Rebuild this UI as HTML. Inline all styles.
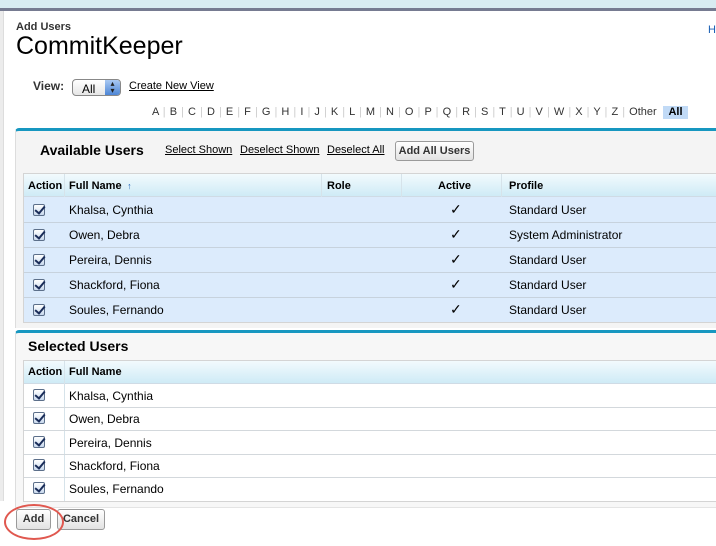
<!DOCTYPE html>
<html><head><meta charset="utf-8"><style>
*{margin:0;padding:0;box-sizing:border-box}
body{width:716px;height:546px;overflow:hidden;background:#fff;font-family:"Liberation Sans",Arial,sans-serif;color:#000;position:relative}
.a{position:absolute;white-space:nowrap}
.lnk{text-decoration:underline;font-size:12px;color:#000}
.hdr{background:linear-gradient(#f2fafd,#cfebf6);}
.cb{position:absolute;width:12px;height:12px;border:1px solid #5c6f8a;border-radius:2px;background:linear-gradient(#fff,#c9d9ee)}
.cb:after{content:"";position:absolute;left:3px;top:-1px;width:4px;height:8px;border:solid #1a2d5a;border-width:0 2px 2px 0;transform:rotate(40deg)}
.btn{position:absolute;border:1px solid #9a9a9a;border-radius:3px;background:linear-gradient(#fff,#e2e2e2);font-weight:bold;font-size:11px;color:#333;text-align:center}
.chk{position:absolute;font-size:14px}
</style></head><body>
<div class="a" style="left:0;top:0;width:716px;height:8px;background:#d8ecf2"></div>
<div class="a" style="left:0;top:8px;width:716px;height:3px;background:#767b91"></div>
<div class="a" style="left:0;top:11px;width:4px;height:490px;background:#ececec;border-right:1px solid #ddd"></div>

<div class="a" style="left:16px;top:21px;font-size:11px;font-weight:bold;color:#333">Add Users</div>
<div class="a" style="left:16px;top:32px;font-size:25px;color:#000">CommitKeeper</div>
<div class="a" style="left:708px;top:24px;font-size:11px;color:#1a5fb4">H</div>

<div class="a" style="left:33px;top:79px;font-size:12px;font-weight:bold;color:#333">View:</div>
<div class="a" style="left:72px;top:79px;width:49px;height:17px;border:1px solid #888;border-radius:4px;background:linear-gradient(#fff,#e6e6e6);font-size:12px;padding:2px 0 0 9px">All
<div style="position:absolute;right:0;top:0;width:15px;height:15px;background:linear-gradient(#a9c9f2,#4d86d6);border-radius:0 3px 3px 0;font-size:8px;color:#222;text-align:center;line-height:7px;padding-top:0px">▴<br>▾</div></div>
<div class="a lnk" style="left:129px;top:80px;font-size:11px">Create New View</div>

<div class="a" style="left:152px;top:106px;font-size:11px;color:#333;word-spacing:1px">A <span style="color:#ccc">|</span> B <span style="color:#ccc">|</span> C <span style="color:#ccc">|</span> D <span style="color:#ccc">|</span> E <span style="color:#ccc">|</span> F <span style="color:#ccc">|</span> G <span style="color:#ccc">|</span> H <span style="color:#ccc">|</span> I <span style="color:#ccc">|</span> J <span style="color:#ccc">|</span> K <span style="color:#ccc">|</span> L <span style="color:#ccc">|</span> M <span style="color:#ccc">|</span> N <span style="color:#ccc">|</span> O <span style="color:#ccc">|</span> P <span style="color:#ccc">|</span> Q <span style="color:#ccc">|</span> R <span style="color:#ccc">|</span> S <span style="color:#ccc">|</span> T <span style="color:#ccc">|</span> U <span style="color:#ccc">|</span> V <span style="color:#ccc">|</span> W <span style="color:#ccc">|</span> X <span style="color:#ccc">|</span> Y <span style="color:#ccc">|</span> Z <span style="color:#ccc">|</span> Other</div>
<div class="a" style="left:663px;top:106px;width:25px;height:13px;background:#c1daf6;font-size:11px;font-weight:bold;text-align:center">All</div>

<!-- Available panel -->
<div class="a" style="left:15px;top:128px;width:701px;height:200px;background:#f4f4f4;border-top:3px solid #1797c0;border-left:1px solid #ddd;border-radius:4px 0 0 0"></div>
<div class="a" style="left:40px;top:142px;font-size:14px;font-weight:bold">Available Users</div>
<div class="a lnk" style="left:165px;top:144px;font-size:11px">Select Shown</div>
<div class="a lnk" style="left:240px;top:144px;font-size:11px">Deselect Shown</div>
<div class="a lnk" style="left:327px;top:144px;font-size:11px">Deselect All</div>
<div class="btn" style="left:395px;top:141px;width:79px;height:20px;line-height:18px">Add All Users</div>

<div class="a" style="left:23px;top:173px;width:693px;height:150px;border:1px solid #d4d4d4;border-right:none;background:#dcebfc"></div>
<div class="a hdr" style="left:24px;top:174px;width:692px;height:23px;border-bottom:1px solid #cfdbe5"></div>
<div class="a" style="left:64px;top:174px;width:1px;height:23px;background:#d6e3ea"></div>
<div class="a" style="left:321px;top:174px;width:1px;height:23px;background:#d6e3ea"></div>
<div class="a" style="left:401px;top:174px;width:1px;height:23px;background:#d6e3ea"></div>
<div class="a" style="left:501px;top:174px;width:1px;height:23px;background:#d6e3ea"></div>
<div class="a" style="left:28px;top:180px;font-size:11px;font-weight:bold">Action</div>
<div class="a" style="left:69px;top:180px;font-size:11px;font-weight:bold">Full Name <span style="color:#1a5fb4;font-size:9px">&nbsp;↑</span></div>
<div class="a" style="left:327px;top:180px;font-size:11px;font-weight:bold">Role</div>
<div class="a" style="left:438px;top:180px;font-size:11px;font-weight:bold">Active</div>
<div class="a" style="left:509px;top:180px;font-size:11px;font-weight:bold">Profile</div>

<div class="a" style="left:24px;top:222px;width:692px;height:1px;background:#c7d2dd"></div>
<div class="a" style="left:24px;top:247px;width:692px;height:1px;background:#c7d2dd"></div>
<div class="a" style="left:24px;top:272px;width:692px;height:1px;background:#c7d2dd"></div>
<div class="a" style="left:24px;top:297px;width:692px;height:1px;background:#c7d2dd"></div>

<div class="cb" style="left:33px;top:204px"></div><div class="a" style="left:69px;top:203px;font-size:12px">Khalsa, Cynthia</div><div class="chk a" style="left:450px;top:201px">✓</div><div class="a" style="left:509px;top:203px;font-size:12px">Standard User</div>
<div class="cb" style="left:33px;top:229px"></div><div class="a" style="left:69px;top:228px;font-size:12px">Owen, Debra</div><div class="chk a" style="left:450px;top:226px">✓</div><div class="a" style="left:509px;top:228px;font-size:12px">System Administrator</div>
<div class="cb" style="left:33px;top:254px"></div><div class="a" style="left:69px;top:253px;font-size:12px">Pereira, Dennis</div><div class="chk a" style="left:450px;top:251px">✓</div><div class="a" style="left:509px;top:253px;font-size:12px">Standard User</div>
<div class="cb" style="left:33px;top:279px"></div><div class="a" style="left:69px;top:278px;font-size:12px">Shackford, Fiona</div><div class="chk a" style="left:450px;top:276px">✓</div><div class="a" style="left:509px;top:278px;font-size:12px">Standard User</div>
<div class="cb" style="left:33px;top:304px"></div><div class="a" style="left:69px;top:303px;font-size:12px">Soules, Fernando</div><div class="chk a" style="left:450px;top:301px">✓</div><div class="a" style="left:509px;top:303px;font-size:12px">Standard User</div>

<!-- Selected panel -->
<div class="a" style="left:15px;top:330px;width:701px;height:178px;background:#f7f7f7;border-top:3px solid #1797c0;border-left:1px solid #ddd;border-bottom:1px solid #e4e4e4;border-radius:4px 0 0 0"></div>
<div class="a" style="left:28px;top:338px;font-size:14px;font-weight:bold">Selected Users</div>
<div class="a" style="left:23px;top:360px;width:693px;height:142px;border:1px solid #d4d4d4;border-right:none;background:#fff"></div>
<div class="a hdr" style="left:24px;top:361px;width:692px;height:23px;border-bottom:1px solid #cfdbe5"></div>
<div class="a" style="left:64px;top:361px;width:1px;height:140px;background:#d6e3ea"></div>
<div class="a" style="left:28px;top:366px;font-size:11px;font-weight:bold">Action</div>
<div class="a" style="left:69px;top:366px;font-size:11px;font-weight:bold">Full Name</div>
<div class="a" style="left:24px;top:407px;width:692px;height:1px;background:#d3d8dc"></div>
<div class="a" style="left:24px;top:430px;width:692px;height:1px;background:#d3d8dc"></div>
<div class="a" style="left:24px;top:454px;width:692px;height:1px;background:#d3d8dc"></div>
<div class="a" style="left:24px;top:477px;width:692px;height:1px;background:#d3d8dc"></div>

<div class="cb" style="left:33px;top:389px"></div><div class="a" style="left:69px;top:389px;font-size:12px">Khalsa, Cynthia</div>
<div class="cb" style="left:33px;top:412px"></div><div class="a" style="left:69px;top:412px;font-size:12px">Owen, Debra</div>
<div class="cb" style="left:33px;top:436px"></div><div class="a" style="left:69px;top:436px;font-size:12px">Pereira, Dennis</div>
<div class="cb" style="left:33px;top:459px"></div><div class="a" style="left:69px;top:459px;font-size:12px">Shackford, Fiona</div>
<div class="cb" style="left:33px;top:482px"></div><div class="a" style="left:69px;top:482px;font-size:12px">Soules, Fernando</div>

<div class="btn" style="left:16px;top:509px;width:35px;height:21px;line-height:19px">Add</div>
<div class="btn" style="left:57px;top:509px;width:48px;height:21px;line-height:19px">Cancel</div>
<div class="a" style="left:4px;top:504px;width:60px;height:36px;border:2px solid #e0584f;border-radius:50%"></div>
</body></html>
